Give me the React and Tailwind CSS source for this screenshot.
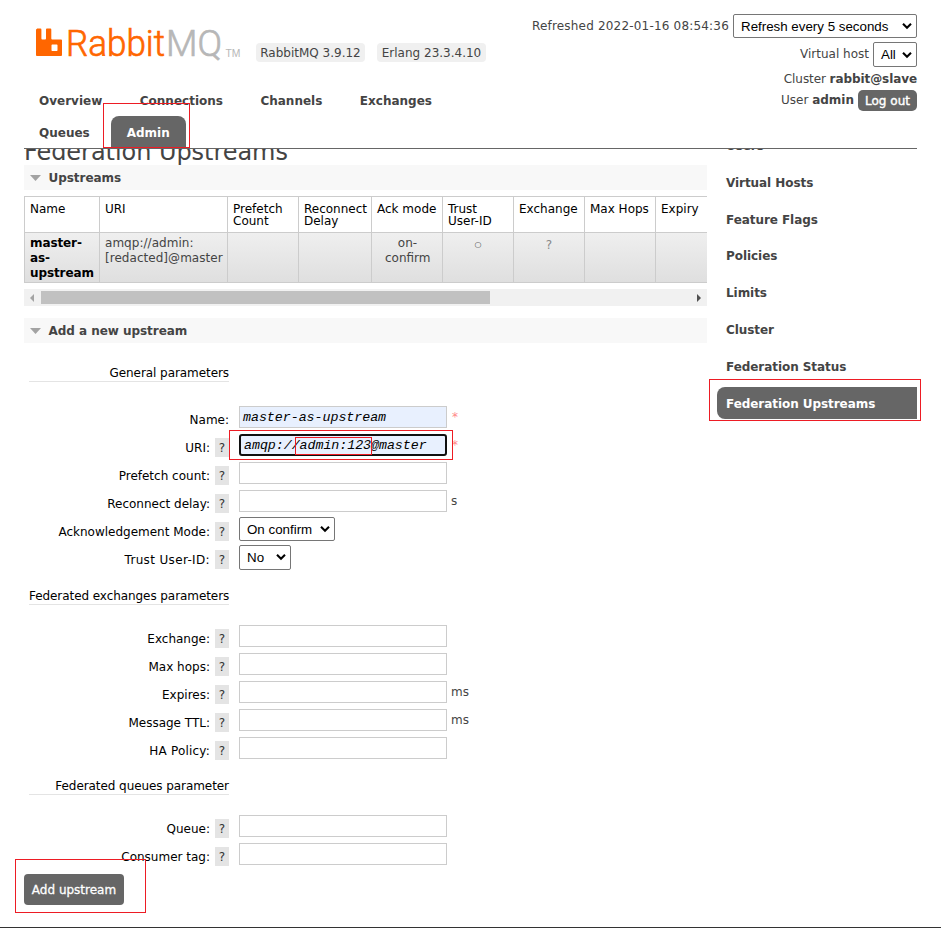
import React from "react";

const navRows = [
  [{ label: "Overview" }, { label: "Connections" }, { label: "Channels" }, { label: "Exchanges" }],
  [{ label: "Queues" }, { label: "Admin", active: true }],
];

const sideItems = [
  "Users",
  "Virtual Hosts",
  "Feature Flags",
  "Policies",
  "Limits",
  "Cluster",
  "Federation Status",
  "Federation Upstreams",
];

function Logo() {
  return (
    <svg className="block shrink-0 overflow-visible" width="205" height="34" viewBox="0 0 205 34">
      <path
        fill="#ff6600"
        fillRule="evenodd"
        d="M.9 3.500h3.600q.9 0 .9 .9v9.100q0 .9 .9 .9h2.800q.9 0 .9-.9v-9.100q0-.9 .9-.9h3.500q.9 0 .9 .9v9.100q0 .9 .9 .9h8.900q.9 0 .9 .9v14.800q0 .9-.9 .9h-24.200q-.9 0-.9-.9v-25.300q0-.9 .9-.9zM16.200 19.500q-.7 0-.7 .7v5q0 .7 .7 .7h4.600q.7 0 .7-.7v-5q0-.7-.7-.7z"
      />
      <text x="30" y="31" fontFamily="Roboto" fontWeight="300" fontSize="37" fill="#ff6600" stroke="#ff6600" strokeWidth="0.700" textLength="99" lengthAdjust="spacingAndGlyphs">Rabbit</text>
      <text x="130" y="31" fontFamily="Roboto" fontWeight="300" fontSize="37" fill="#b7b7b7" stroke="#b7b7b7" strokeWidth="0.700" textLength="56" lengthAdjust="spacingAndGlyphs">MQ</text>
      <text x="189.500" y="31.500" fontFamily="Liberation Sans" fontSize="10.500" fill="#b7b7b7" textLength="15" lengthAdjust="spacingAndGlyphs">TM</text>
    </svg>
  );
}

function Select({ label, className }) {
  return (
    <div
      className={
        "flex items-center justify-between rounded-[2px] border border-[#767676] bg-white pl-[7px] pr-[4px] font-['Liberation_Sans',sans-serif] text-[13.333px] leading-[15px] text-black " +
        className
      }
    >
      <span className="whitespace-nowrap">{label}</span>
      <svg width="10" height="8" viewBox="0 0 10 8">
        <path d="M1 1.800L5 5.700L9 1.800" fill="none" stroke="#000" strokeWidth="2.100" />
      </svg>
    </div>
  );
}

function SectionBar({ title }) {
  return (
    <div className="flex h-[25px] items-center bg-[#f8f8f8] pl-[6px]">
      <svg width="11" height="6" viewBox="0 0 11 6">
        <path d="M0 0H11L5.500 6Z" fill="#a3a3a3" />
      </svg>
      <h2 className="ml-[7.500px] pt-[2px] text-[12px] font-bold leading-[15px] tracking-[-0.040px] text-[#444]">{title}</h2>
    </div>
  );
}

const columns = ["Name", "URI", "Prefetch Count", "Reconnect Delay", "Ack mode", "Trust\nUser-ID", "Exchange", "Max Hops", "Expiry"];
const values = ["master-as-upstream", "amqp://admin: [redacted]@master", "", "", "on-confirm", "○", "?", "", ""];
const valueStyles = [
  "font-bold text-black tracking-[-0.100px] pt-[3px]",
  "text-[#444] tracking-[0.040px] pt-[3px]",
  "",
  "",
  "text-center text-[#444] pl-[13px] pr-3 pt-[3px]",
  "text-center text-[#444] text-[8px] pt-[4px]",
  "text-center text-[#888] pt-[5px]",
  "",
  "",
];
const tableGrid = "grid grid-cols-[75px_128px_71px_73px_71px_71px_71px_71px_52px]";

function UpstreamTable() {
  return (
    <div className="mt-[6px] border-y border-[#ccc]">
      <div className={tableGrid + " h-[36px] border-b border-[#ccc]"}>
        {columns.map((c) => (
          <div key={c} className="whitespace-pre-line border-l border-[#ccc] pl-[5px] pt-[6px] leading-[12px] text-black">
            {c}
          </div>
        ))}
      </div>
      <div className={tableGrid + " h-[49px] bg-gradient-to-b from-[#efefef] to-[#dfdfdf]"}>
        {values.map((v, i) => (
          <div key={columns[i]} className={"border-l border-[#ccc] px-[5px] leading-[15px] " + valueStyles[i]}>
            {v}
          </div>
        ))}
      </div>
    </div>
  );
}

function Scrollbar() {
  return (
    <div className="mt-[6px] flex h-[17px] items-center bg-[#f1f1f1]">
      <svg className="ml-[6px]" width="4" height="8" viewBox="0 0 4 8">
        <path d="M4 0V8L0 4Z" fill="#a3a3a3" />
      </svg>
      <div className="ml-[7px] h-[13px] w-[449px] bg-[#c1c1c1]" />
      <svg className="ml-auto mr-[6px]" width="4" height="8" viewBox="0 0 4 8">
        <path d="M0 0V8L4 4Z" fill="#505050" />
      </svg>
    </div>
  );
}

function Group({ title, className }) {
  return (
    <h3 className={"ml-[5px] h-[18px] w-[200px] whitespace-nowrap border-b border-[#e4e4e4] text-right text-[12px] leading-[19px] tracking-[-0.070px] text-black " + className}>
      {title}
    </h3>
  );
}

function Row({ label, help = true, children, unit, required, labelClass = "" }) {
  return (
    <div className="flex h-[28px] items-start">
      <div className="ml-[5px] flex w-[200px] justify-end pt-[4px] text-black">
        <span className={"h-[19px] whitespace-nowrap leading-[21px] " + labelClass}>{label}:</span>
        {help && <span className="ml-[5px] h-[19px] w-[14px] bg-[#e4e4e4] text-center leading-[20px] text-[#333]">?</span>}
      </div>
      <div className="ml-[10px] flex h-[22px] items-center">
        {children || <div className="h-[22px] w-[208px] border border-[#ccc] bg-white" />}
        {unit && <span className="ml-1">{unit}</span>}
        {required && <span className="ml-[5px] text-[#f88]">*</span>}
      </div>
    </div>
  );
}

export default function App() {
  return (
    <div className="relative h-[928px] w-[941px] overflow-hidden bg-white font-['DejaVu_Sans',sans-serif] text-[12px] leading-[15px] text-[#444]">
      <header className="mx-6 flex h-[149px] justify-between border-b border-[#666]">
        <div className="pt-[25px]">
          <div className="ml-3 flex items-start">
            <Logo />
            <span className="ml-[15px] mt-[18px] h-[19px] w-[109px] whitespace-nowrap rounded-[4px] bg-[#f0f0f0] text-center leading-[20px]">RabbitMQ 3.9.12</span>
            <span className="ml-3 mt-[18px] h-[19px] w-[109px] whitespace-nowrap rounded-[4px] bg-[#f0f0f0] text-center leading-[20px]">Erlang 23.3.4.10</span>
          </div>
          <nav className="-ml-px mt-[22px]">
            {navRows.map((row, i) => (
              <ul key={i} className={"flex " + (i === 0 ? "gap-[5.500px]" : "gap-[5px]")}>
                {row.map((item) => (
                  <li
                    key={item.label}
                    className={
                      "h-8 rounded-t-[8px] px-4 font-bold leading-[34px] " + (item.active ? "bg-[#666] text-white" : "")
                    }
                  >
                    {item.label}
                  </li>
                ))}
              </ul>
            ))}
          </nav>
        </div>
        <div className="flex flex-col items-end pt-[14px]">
          <div className="flex items-center gap-1">
            <span className="whitespace-nowrap pt-px tracking-[0.190px]">Refreshed 2022-01-16 08:54:36</span>
            <Select label="Refresh every 5 seconds" className="h-6 w-[184px]" />
          </div>
          <div className="mt-1 flex items-center gap-1">
            <span>Virtual host</span>
            <Select label="All" className="h-[25px] w-[44px]" />
          </div>
          <div className="mt-[5px] tracking-[-0.080px]">
            Cluster <b>rabbit@slave</b>
          </div>
          <div className="mt-[3px] flex items-center gap-1">
            <span>
              User <b>admin</b>
            </span>
            <span className="h-[21px] w-[59px] whitespace-nowrap rounded-[5px] bg-[#666] text-center leading-[22px] text-white [-webkit-text-stroke:0.400px_white]">Log out</span>
          </div>
        </div>
      </header>

      <div className="ml-6 flex h-[778px] gap-[10px] overflow-hidden">
        <main className="w-[683px]">
          <h1 className="-mt-[13px] h-[29px] whitespace-nowrap text-[24px] leading-[32px] tracking-[-0.050px]">Federation Upstreams</h1>
          <SectionBar title="Upstreams" />
          <UpstreamTable />
          <Scrollbar />
          <div className="mt-3">
            <SectionBar title="Add a new upstream" />
          </div>

          <Group title="General parameters" className="mt-[21px]" />
          <div className="mt-6">
            <Row label="Name" help={false} required>
              <div className="h-[22px] w-[208px] border border-[#ccc] bg-[#e8f0fe] pl-[3px] font-['Liberation_Mono',monospace] text-[13.333px] italic leading-[22px] tracking-[-0.050px] text-black">
                master-as-upstream
              </div>
            </Row>
            <Row label="URI" required>
              <div className="h-[22px] w-[208px] rounded-[3px] border-2 border-[#101010] bg-[#e8f0fe] pl-[3px] font-['Liberation_Mono',monospace] text-[13.333px] italic leading-[20px] tracking-[-0.060px] text-black">
                amqp://admin:123@master
              </div>
            </Row>
            <Row label="Prefetch count" />
            <Row label="Reconnect delay" unit="s" />
            <Row label="Acknowledgement Mode">
              <Select label="On confirm" className="h-6 w-[96px]" />
            </Row>
            <Row label="Trust User-ID" labelClass="tracking-[0.350px]">
              <Select label="No" className="h-[25px] w-[52px]" />
            </Row>
          </div>

          <Group title="Federated exchanges parameters" className="mt-[13px]" />
          <div className="mt-5">
            <Row label="Exchange" />
            <Row label="Max hops" />
            <Row label="Expires" unit="ms" />
            <Row label="Message TTL" unit="ms" />
            <Row label="HA Policy" labelClass="tracking-[0.200px]" />
          </div>

          <Group title="Federated queues parameter" className="mt-3" />
          <div className="mt-5">
            <Row label="Queue" />
            <Row label="Consumer tag" />
          </div>
          <button className="mt-[3px] block h-[31px] w-[100px] whitespace-nowrap rounded-[4px] bg-[#666] pt-px text-center text-[12px] text-white [-webkit-text-stroke:0.300px_white]">
            Add upstream
          </button>
        </main>

        <aside className="-mt-[20px] flex w-[200px] flex-col gap-[4.800px]">
          {sideItems.map((item, i) => (
            <a
              key={item}
              className={
                "block h-8 shrink-0 whitespace-nowrap rounded-l-[8px] pl-[9px] font-bold leading-[34px] tracking-[-0.060px] " +
                (i === sideItems.length - 1 ? "bg-[#666] text-white" : "")
              }
            >
              {item}
            </a>
          ))}
        </aside>
      </div>
      <div className="h-px bg-[#333]" />

      <div className="absolute left-[103px] top-[103px] h-[45px] w-[87px] border border-[#ed1c24]" />
      <div className="absolute left-[709px] top-[379px] h-[42px] w-[212px] border border-[#ed1c24]" />
      <div className="absolute left-[229px] top-[430px] h-[30px] w-[224px] border border-[#ed1c24]" />
      <div className="absolute left-[295px] top-[437px] h-[18px] w-[77px] border border-[#ed1c24]" />
      <div className="absolute left-[15px] top-[859px] h-[54px] w-[131px] border border-[#ed1c24]" />
    </div>
  );
}
